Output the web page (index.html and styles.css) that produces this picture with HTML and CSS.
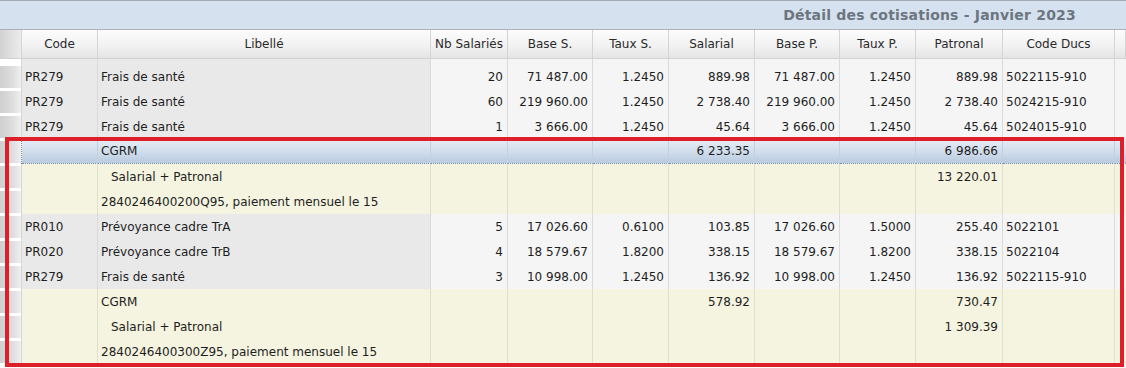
FILE: index.html
```html
<!DOCTYPE html>
<html lang="fr">
<head>
    <meta charset="UTF-8">
    <title>Détail des cotisations</title>
    <link rel="stylesheet" href="styles.css">
</head>
<body>
<div class="grid">
    <div class="title-bar">Détail des cotisations - Janvier 2023</div>
    <table class="cotis">
        <colgroup>
            <col class="c-sel">
            <col class="c-code">
            <col class="c-lib">
            <col class="c-nb">
            <col class="c-base">
            <col class="c-taux">
            <col class="c-sal">
            <col class="c-base">
            <col class="c-taux">
            <col class="c-pat">
            <col class="c-ducs">
            <col class="c-tail">
        </colgroup>
        <thead>
            <tr>
                <th class="sel"></th>
                <th>Code</th>
                <th>Libellé</th>
                <th>Nb Salariés</th>
                <th>Base S.</th>
                <th>Taux S.</th>
                <th>Salarial</th>
                <th>Base P.</th>
                <th>Taux P.</th>
                <th>Patronal</th>
                <th>Code Ducs</th>
                <th class="tail"></th>
            </tr>
        </thead>
        <tbody>
            <tr class="spacer">
                <td class="sel"></td><td class="txt"></td><td class="txt"></td>
                <td></td><td></td><td></td><td></td><td></td><td></td><td></td><td></td><td class="tail"></td>
            </tr>
            <tr class="line">
                <td class="sel"><span></span></td>
                <td class="txt">PR279</td>
                <td class="txt">Frais de santé</td>
                <td class="num">20</td>
                <td class="num">71&nbsp;487.00</td>
                <td class="num">1.2450</td>
                <td class="num">889.98</td>
                <td class="num">71&nbsp;487.00</td>
                <td class="num">1.2450</td>
                <td class="num">889.98</td>
                <td>5022115-910</td>
                <td class="tail"></td>
            </tr>
            <tr class="line">
                <td class="sel"><span></span></td>
                <td class="txt">PR279</td>
                <td class="txt">Frais de santé</td>
                <td class="num">60</td>
                <td class="num">219&nbsp;960.00</td>
                <td class="num">1.2450</td>
                <td class="num">2&nbsp;738.40</td>
                <td class="num">219&nbsp;960.00</td>
                <td class="num">1.2450</td>
                <td class="num">2&nbsp;738.40</td>
                <td>5024215-910</td>
                <td class="tail"></td>
            </tr>
            <tr class="line">
                <td class="sel"><span></span></td>
                <td class="txt">PR279</td>
                <td class="txt">Frais de santé</td>
                <td class="num">1</td>
                <td class="num">3&nbsp;666.00</td>
                <td class="num">1.2450</td>
                <td class="num">45.64</td>
                <td class="num">3&nbsp;666.00</td>
                <td class="num">1.2450</td>
                <td class="num">45.64</td>
                <td>5024015-910</td>
                <td class="tail"></td>
            </tr>
            <tr class="total current">
                <td class="sel"><span></span></td>
                <td></td>
                <td>CGRM</td>
                <td></td>
                <td></td>
                <td></td>
                <td class="num">6&nbsp;233.35</td>
                <td></td>
                <td></td>
                <td class="num">6&nbsp;986.66</td>
                <td></td>
                <td class="tail"></td>
            </tr>
            <tr class="total">
                <td class="sel"><span></span></td>
                <td></td>
                <td class="indent">Salarial + Patronal</td>
                <td></td><td></td><td></td><td></td><td></td><td></td>
                <td class="num">13&nbsp;220.01</td>
                <td></td>
                <td class="tail"></td>
            </tr>
            <tr class="total">
                <td class="sel"><span></span></td>
                <td></td>
                <td>2840246400200Q95, paiement mensuel le 15</td>
                <td></td><td></td><td></td><td></td><td></td><td></td><td></td><td></td>
                <td class="tail"></td>
            </tr>
            <tr class="line">
                <td class="sel"><span></span></td>
                <td class="txt">PR010</td>
                <td class="txt">Prévoyance cadre TrA</td>
                <td class="num">5</td>
                <td class="num">17&nbsp;026.60</td>
                <td class="num">0.6100</td>
                <td class="num">103.85</td>
                <td class="num">17&nbsp;026.60</td>
                <td class="num">1.5000</td>
                <td class="num">255.40</td>
                <td>5022101</td>
                <td class="tail"></td>
            </tr>
            <tr class="line">
                <td class="sel"><span></span></td>
                <td class="txt">PR020</td>
                <td class="txt">Prévoyance cadre TrB</td>
                <td class="num">4</td>
                <td class="num">18&nbsp;579.67</td>
                <td class="num">1.8200</td>
                <td class="num">338.15</td>
                <td class="num">18&nbsp;579.67</td>
                <td class="num">1.8200</td>
                <td class="num">338.15</td>
                <td>5022104</td>
                <td class="tail"></td>
            </tr>
            <tr class="line">
                <td class="sel"><span></span></td>
                <td class="txt">PR279</td>
                <td class="txt">Frais de santé</td>
                <td class="num">3</td>
                <td class="num">10&nbsp;998.00</td>
                <td class="num">1.2450</td>
                <td class="num">136.92</td>
                <td class="num">10&nbsp;998.00</td>
                <td class="num">1.2450</td>
                <td class="num">136.92</td>
                <td>5022115-910</td>
                <td class="tail"></td>
            </tr>
            <tr class="total">
                <td class="sel"><span></span></td>
                <td></td>
                <td>CGRM</td>
                <td></td><td></td><td></td>
                <td class="num">578.92</td>
                <td></td><td></td>
                <td class="num">730.47</td>
                <td></td>
                <td class="tail"></td>
            </tr>
            <tr class="total">
                <td class="sel"><span></span></td>
                <td></td>
                <td class="indent">Salarial + Patronal</td>
                <td></td><td></td><td></td><td></td><td></td><td></td>
                <td class="num">1&nbsp;309.39</td>
                <td></td>
                <td class="tail"></td>
            </tr>
            <tr class="total">
                <td class="sel"><span></span></td>
                <td></td>
                <td>2840246400300Z95, paiement mensuel le 15</td>
                <td></td><td></td><td></td><td></td><td></td><td></td><td></td><td></td>
                <td class="tail"></td>
            </tr>
        </tbody>
    </table>
    <div class="highlight"></div>
</div>
</body>
</html>
```

FILE: styles.css
```css
body {
    margin: 0;
    font-family: 'DejaVu Sans', Verdana, sans-serif;
    font-size: 12px;
    color: #1e1e1e;
    background: #fff;
    overflow: hidden;
}
.grid {
    position: relative;
    width: 1126px;
    height: 368px;
    overflow: hidden;
}
.title-bar {
    height: 28px;
    line-height: 28px;
    border-top: 1px solid #a3a9b0;
    border-bottom: 1px solid #aab1b9;
    background-color: #d5e1ee;
    color: #6c7580;
    font-weight: bold;
    font-size: 14px;
    letter-spacing: 0.2px;
    text-align: right;
    padding-right: 50px;
}
.cotis {
    width: 1126px;
    table-layout: fixed;
    border-collapse: separate;
    border-spacing: 0;
}
.c-sel { width: 22px; }
.c-code { width: 76px; }
.c-lib { width: 333px; }
.c-nb { width: 77px; }
.c-base { width: 85px; }
.c-taux { width: 76px; }
.c-sal { width: 86px; }
.c-pat { width: 87px; }
.c-ducs { width: 112px; }
.c-tail { width: 11px; }

.cotis th {
    height: 28px;
    padding: 0;
    font-weight: normal;
    color: #2a2a2a;
    text-align: center;
    white-space: nowrap;
    background: linear-gradient(to bottom, #fcfcfc 0%, #f2f2f2 55%, #e4e4e4 100%);
    border-bottom: 1px solid #d2d2d2;
    border-right: 1px solid #d4d4d4;
}
.cotis th.sel {
    background: linear-gradient(to right, #d2d2d2, #ececec);
}
.cotis td {
    padding: 0 4px 0 3px;
    white-space: nowrap;
    overflow: hidden;
    background-color: #f5f5f5;
    border-right: 1px solid #dadada;
}
.cotis td.num {
    text-align: right;
}
.cotis td.tail {
    border-right: none;
}
.cotis td.sel {
    padding: 0;
    background-color: #fff;
    border-right: 1px solid #d6d6d6;
}
.cotis td.sel span {
    display: block;
    height: 22px;
    margin-top: 1px;
    background: linear-gradient(to right, #cfcfcf 0%, #dedede 60%, #efefef 100%);
}
.spacer td {
    height: 5px;
}
.line td {
    height: 25px;
}
.line td.txt,
.spacer td.txt {
    background-color: #e9e9e9;
}

/* lignes de total par organisme */
.total td {
    height: 25px;
    background-color: #f5f4e0;
    border-right-color: #e0dfcd;
}
.total td.indent {
    padding-left: 13px;
}
.total.current td {
    height: 24px;
    background: linear-gradient(to bottom, #e6edf6 0%, #d2deec 50%, #b9cbe0 100%);
    border-right-color: #c3d0df;
    border-bottom: 1px dotted #7e8c9c;
}
.total.current td.sel {
    background: #fff;
    border-bottom: none;
    border-right: 1px dotted #7e8c9c;
}

.highlight {
    position: absolute;
    left: 5px;
    top: 137px;
    width: 1111px;
    height: 222px;
    border: 4px solid #de1f2a;
}
```
